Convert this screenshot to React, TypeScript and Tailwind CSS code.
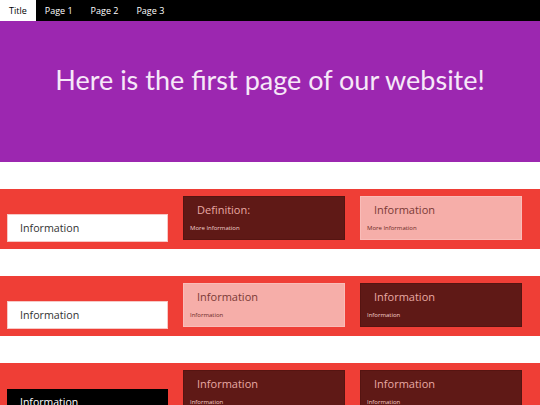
import React from 'react';

// Pestañas de la barra superior
const TABS = ['Title', 'Page 1', 'Page 2', 'Page 3'];

type Tone = 'dark' | 'light';

interface CardProps {
  title: string;
  detail: string;
  tone: Tone;
}

interface RowProps {
  boxLabel: string;
  boxDark?: boolean;
  cards: CardProps[];
}

const ROWS: RowProps[] = [
  {
    boxLabel: 'Information',
    cards: [
      { title: 'Definition:', detail: 'More Information', tone: 'dark' },
      { title: 'Information', detail: 'More Information', tone: 'light' },
    ],
  },
  {
    boxLabel: 'Information',
    cards: [
      { title: 'Information', detail: 'Information', tone: 'light' },
      { title: 'Information', detail: 'Information', tone: 'dark' },
    ],
  },
  {
    boxLabel: 'Information',
    boxDark: true,
    cards: [
      { title: 'Information', detail: 'Information', tone: 'dark' },
      { title: 'Information', detail: 'Information', tone: 'dark' },
    ],
  },
];

const Card: React.FC<CardProps> = ({ title, detail, tone }) => {
  const dark = tone === 'dark';
  return (
    <div
      className={
        dark
          ? 'w-[162px] h-[44px] border border-[#551411] bg-[#5f1916] text-[#e9a9a4]'
          : 'w-[162px] h-[44px] border border-[#f9bcb8] bg-[#f6aea9] text-[#7b3a36]'
      }
    >
      <p className="pl-[13px] pt-[6px] text-[11px] leading-[14px]">{title}</p>
      <p className={dark ? 'pl-[6px] pt-[7px] text-[6px] leading-[8px] text-[#f3d0cd]' : 'pl-[6px] pt-[7px] text-[6px] leading-[8px] text-[#6b2a26]'}>
        {detail}
      </p>
    </div>
  );
};

const Row: React.FC<RowProps> = ({ boxLabel, boxDark, cards }) => (
  <section className="mt-[27px] flex h-[60px] items-start gap-[15px] bg-[#ef3e36] pl-[7px] pt-[7px]">
    <div
      className={
        boxDark
          ? 'mt-[19px] flex h-[28px] w-[161px] items-center bg-black pl-[13px] text-[10.5px] text-white'
          : 'mt-[18px] flex h-[28px] w-[161px] items-center border border-[#f7c9c6] bg-white pl-[12px] text-[10.7px] text-[#333]'
      }
    >
      {boxLabel}
    </div>
    {cards.map((c, i) => (
      <Card key={i} {...c} />
    ))}
  </section>
);

export default function App() {
  return (
    <div className="min-h-screen bg-white font-['Open_Sans',sans-serif]">
      {/* Barra de navegación */}
      <nav className="flex h-[21px] bg-black text-[9px]">
        {TABS.map((t, i) => (
          <span
            key={t}
            className={
              i === 0
                ? 'flex items-center bg-white px-[9px] text-black'
                : 'flex items-center px-[9px] text-white'
            }
          >
            {t}
          </span>
        ))}
      </nav>

      {/* Cabecera */}
      <header className="flex h-[141px] items-center justify-center bg-[#9c27b0] pb-[22px]">
        <h1 className="font-['Lato',sans-serif] text-[27px] text-[#f6e8f8]">
          Here is the first page of our website!
        </h1>
      </header>

      {ROWS.map((r, i) => (
        <Row key={i} {...r} />
      ))}
    </div>
  );
}
